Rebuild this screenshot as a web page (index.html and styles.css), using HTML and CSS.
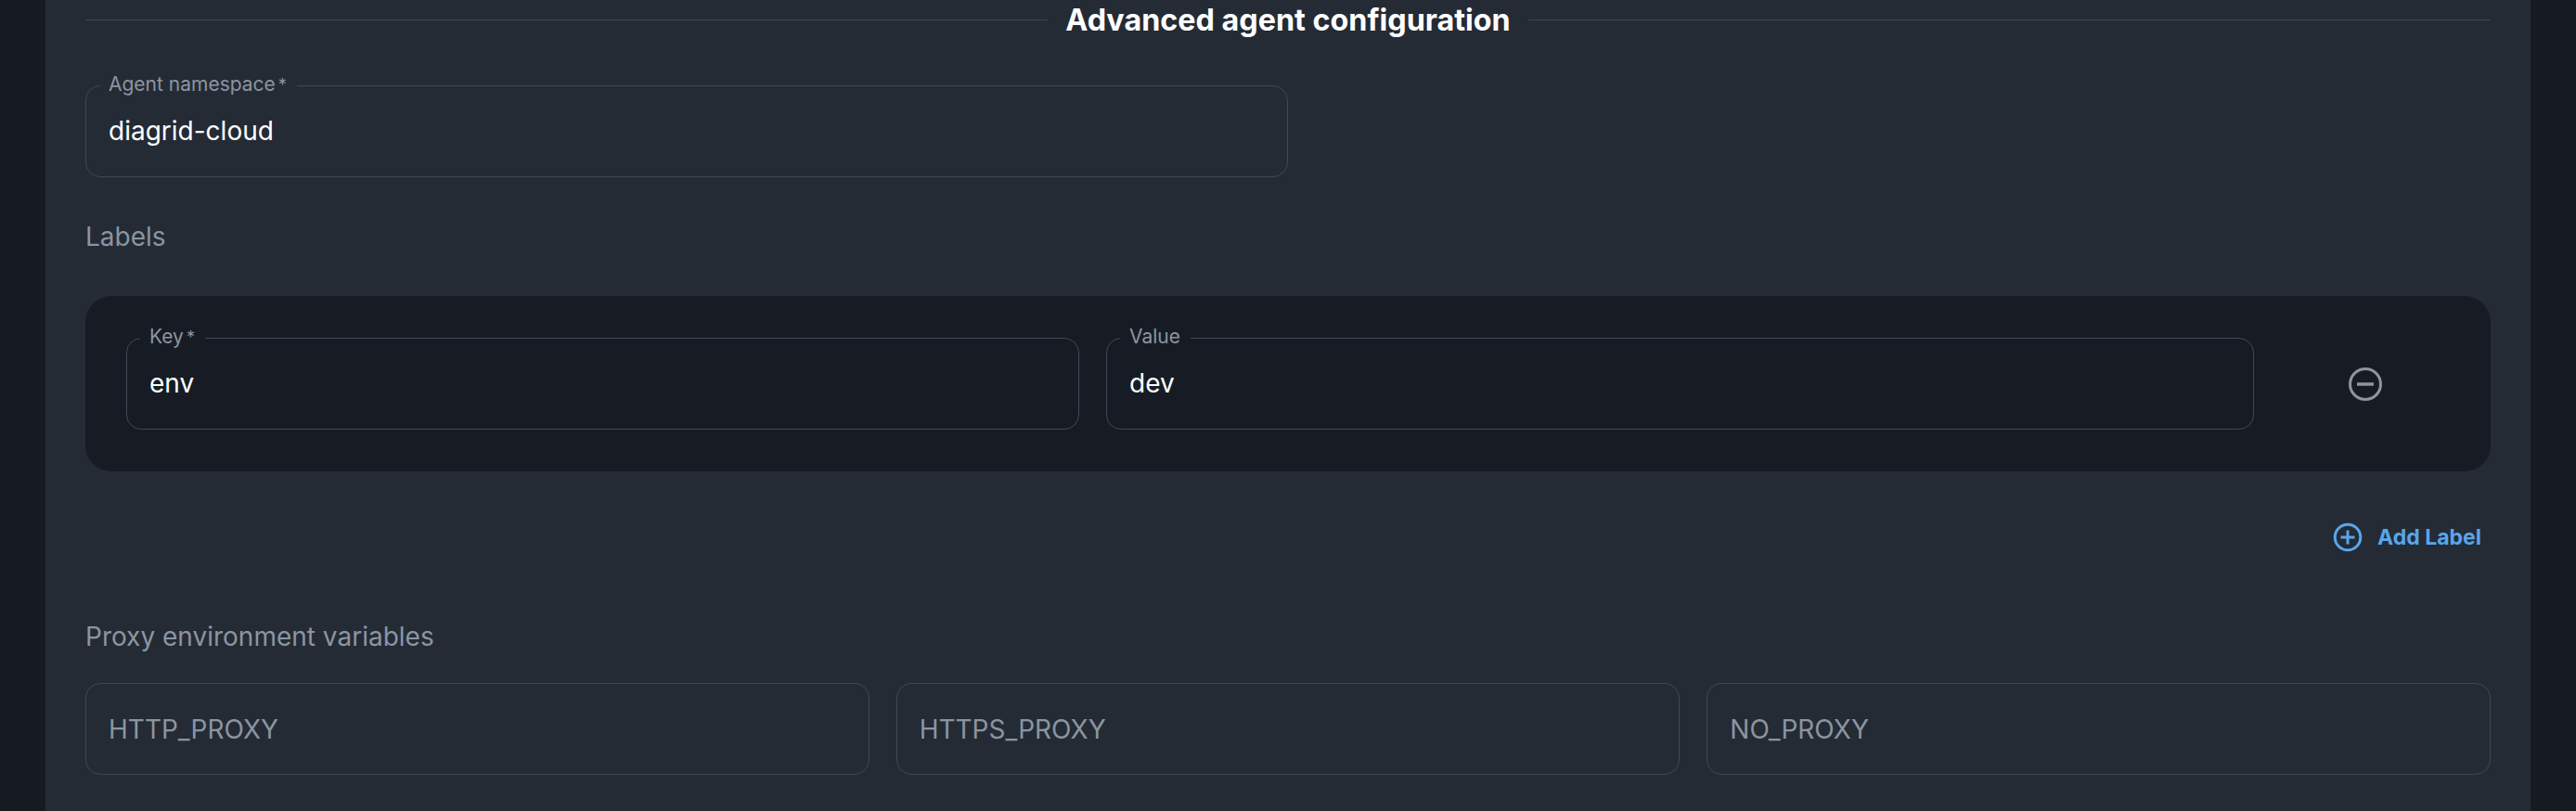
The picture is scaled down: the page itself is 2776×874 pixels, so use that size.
FILE: index.html
```html
<!DOCTYPE html>
<html lang="en">
<head>
  <meta charset="UTF-8" />
  <title>Advanced agent configuration</title>
  <link rel="stylesheet" href="styles.css">
</head>
<body>

  <main class="panel">
    <div class="divider">
      <span class="divider-line"></span>
      <h2>Advanced agent configuration</h2>
      <span class="divider-line"></span>
    </div>

    <fieldset class="field namespace">
      <legend>Agent namespace<sup>*</sup></legend>
      <input type="text" value="diagrid-cloud">
    </fieldset>

    <h3 class="section-title labels-title">Labels</h3>

    <div class="label-card">
      <fieldset class="field key">
        <legend>Key<sup>*</sup></legend>
        <input type="text" value="env">
      </fieldset>
      <fieldset class="field value">
        <legend>Value</legend>
        <input type="text" value="dev">
      </fieldset>
      <button class="remove-btn" type="button" aria-label="Remove label">
        <svg width="38" height="38" viewBox="0 0 38 38" fill="none" stroke="#8f959d">
          <circle cx="19" cy="19" r="16.5" stroke-width="3"/>
          <path d="M10 19h18" stroke-width="3.5"/>
        </svg>
      </button>
    </div>

    <div class="add-row">
      <button class="add-btn" type="button">
        <svg width="32" height="32" viewBox="0 0 32 32" fill="none" stroke="#58a6ec" stroke-width="3">
          <circle cx="16" cy="16" r="13.8"/>
          <path d="M16 8.500v15M8.500 16h15"/>
        </svg>
        Add Label
      </button>
    </div>

    <h3 class="section-title">Proxy environment variables</h3>

    <div class="proxy-grid">
      <fieldset class="field"><input type="text" placeholder="HTTP_PROXY"></fieldset>
      <fieldset class="field"><input type="text" placeholder="HTTPS_PROXY"></fieldset>
      <fieldset class="field"><input type="text" placeholder="NO_PROXY"></fieldset>
    </div>
  </main>

</body>
</html>
```

FILE: styles.css
```css
body {
  font-family: "Inter", "Open Sans", sans-serif;
  background: #161b22;
  color: #fff;
  height: 874px;
  margin: 0;
  overflow: hidden;
}

.panel {
  background: #242b35;
  margin: 0 49px;
  padding: 0 43px;
  height: 874px;
  box-sizing: border-box;
}

.divider {
  display: flex;
  align-items: center;
  gap: 19px;
  height: 43px;
  margin-bottom: 49px;
}

.divider-line {
  flex: 1;
  height: 1px;
  background: #3f4652;
}

.divider h2 {
  font-size: 32.300px;
  font-weight: 700;
  margin: 0;
}

.field {
  border: 1.500px solid #414854;
  border-radius: 16px;
  margin: 0;
  padding: 0 24px;
  min-width: 0;
  height: 99px;
  box-sizing: border-box;
}

.field legend {
  color: #8b95a1;
  font-size: 21px;
  line-height: 18px;
  margin-left: -10px;
  padding: 0 11px 2px 10px;
}

.field legend sup {
  font-size: 18px;
  line-height: 0;
  vertical-align: baseline;
  margin-left: 3px;
}

.field input {
  display: block;
  width: 100%;
  height: 98px;
  background: none;
  border: 0;
  outline: 0;
  padding: 0;
  color: #fff;
  font-family: inherit;
  font-size: 28px;
}

.field legend + input {
  height: 78px;
}

.field input::placeholder {
  color: #8b95a1;
  opacity: 1;
}

.namespace {
  width: 1296px;
  height: 109px;
  margin-top: -10px;
}

.section-title {
  color: #8b95a1;
  font-size: 28px;
  font-weight: 400;
  margin: 0;
  line-height: 36px;
}

.labels-title {
  margin-top: 46px;
  margin-bottom: 46px;
}

.label-card {
  display: flex;
  gap: 29px;
  align-items: flex-start;
  background: #171c24;
  border-radius: 28px;
  padding: 35px 44px 0;
  height: 189px;
  box-sizing: border-box;
}

.key {
  width: 1027px;
  height: 109px;
}

.value {
  width: 1237px;
  height: 109px;
}

.remove-btn {
  background: none;
  border: 0;
  padding: 0;
  margin-left: 72px;
  margin-top: 41px;
  display: flex;
}

.add-row {
  display: flex;
  justify-content: flex-end;
  padding-right: 10px;
  margin-top: 54px;
  height: 34px;
}

.add-btn {
  display: flex;
  align-items: center;
  gap: 16px;
  background: none;
  border: 0;
  padding: 0;
  color: #58a6ec;
  font-family: inherit;
  font-size: 23px;
  font-weight: 700;
}

.add-row + .section-title {
  margin-top: 72px;
  margin-bottom: 32px;
}

.proxy-grid {
  display: grid;
  grid-template-columns: repeat(3, 1fr);
  gap: 29px;
}
```
